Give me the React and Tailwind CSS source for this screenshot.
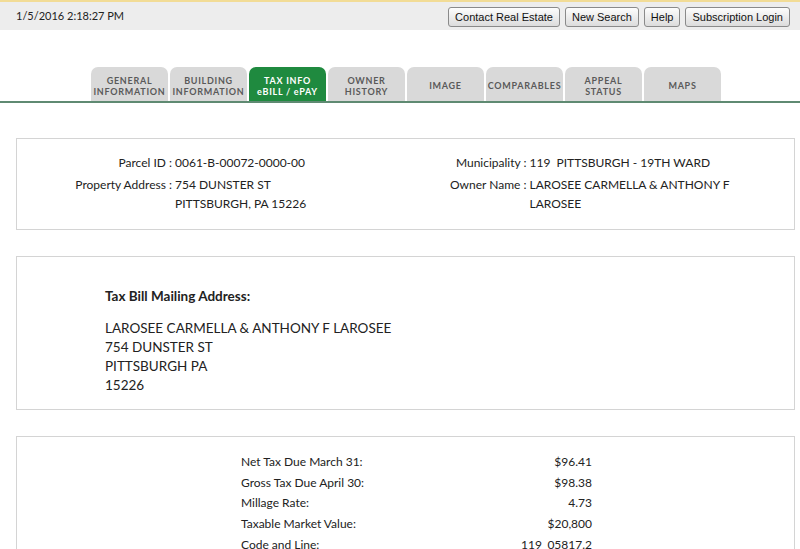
// Parcel detail page: tax info tab
const TABS = [
  ['GENERAL', 'INFORMATION'],
  ['BUILDING', 'INFORMATION'],
  ['TAX INFO', 'eBILL / ePAY'],
  ['OWNER', 'HISTORY'],
  ['IMAGE'],
  ['COMPARABLES'],
  ['APPEAL', 'STATUS'],
  ['MAPS'],
];

const TAX_ROWS = [
  ['Net Tax Due March 31:', '$96.41'],
  ['Gross Tax Due April 30:', '$98.38'],
  ['Millage Rate:', '4.73'],
  ['Taxable Market Value:', '$20,800'],
  ['Code and Line:', '119_05817.2'],
];

function ToolButton({ children }) {
  return (
    <button className="h-[20px] px-[6px] border border-[#8a8a8a] rounded-[3px] bg-gradient-to-b from-[#fdfdfd] to-[#dcdcdc] text-[11px] text-[#111] leading-none font-['Liberation_Sans',sans-serif]">
      {children}
    </button>
  );
}

function Field({ label, children, labelWidth }) {
  return (
    <div className="flex">
      <div className="text-right shrink-0" style={{ width: labelWidth }}>
        {label} :
      </div>
      <div className="pl-[3px]">{children}</div>
    </div>
  );
}

export default function App() {
  return (
    <div className="min-h-[549px] bg-white font-['Lato',sans-serif] text-[#222]">
      {/* top toolbar */}
      <div className="h-[30px] bg-[#ededed] border-t-2 border-[#f2dc96] flex items-center justify-between pl-[16px] pr-[10px]">
        <span className="text-[11px] text-[#222]">1/5/2016 2:18:27 PM</span>
        <div className="flex gap-[5px] pt-[2px]">
          <ToolButton>Contact Real Estate</ToolButton>
          <ToolButton>New Search</ToolButton>
          <ToolButton>Help</ToolButton>
          <ToolButton>Subscription Login</ToolButton>
        </div>
      </div>

      {/* tab strip */}
      <div className="mt-[38px] flex items-end border-b-2 border-[#5f8a72] pl-[91px] h-[35px]">
        {TABS.map((lines, i) => {
          const active = i === 2;
          return (
            <div
              key={lines.join(' ')}
              className={`w-[77px] h-[34px] mr-[2px] rounded-t-[7px] flex flex-col items-center justify-center pt-[3px] text-[9px] font-bold tracking-[0.08em] leading-[11px] ${
                active ? 'bg-[#1f8a3f] text-white' : 'bg-[#d9d9d9] text-[#5a5a5a]'
              }`}
            >
              {lines.map((l) => (
                <span key={l}>{l}</span>
              ))}
            </div>
          );
        })}
      </div>

      <div className="px-[16px] pr-[5px] pt-[35px] flex flex-col gap-[26px]">
        {/* parcel summary */}
        <div className="border border-[#d4d4d4] flex pt-[14px] pb-[16px] text-[12px] leading-[19px]">
          <div className="w-1/2 flex flex-col gap-[3px]">
            <Field label="Parcel ID" labelWidth={155}>0061-B-00072-0000-00</Field>
            <Field label="Property Address" labelWidth={155}>
              754 DUNSTER ST
              <br />
              PITTSBURGH, PA 15226
            </Field>
          </div>
          <div className="w-1/2 flex flex-col gap-[3px]">
            <Field label="Municipality" labelWidth={121}>119&nbsp; PITTSBURGH - 19TH WARD</Field>
            <Field label="Owner Name" labelWidth={121}>
              LAROSEE CARMELLA &amp; ANTHONY F
              <br />
              LAROSEE
            </Field>
          </div>
        </div>

        {/* mailing address */}
        <div className="border border-[#d4d4d4] pl-[88px] pt-[29px] pb-[14px]">
          <div className="text-[13.5px] font-bold leading-[20px]">Tax Bill Mailing Address:</div>
          <div className="mt-[13px] text-[13.5px] leading-[19px]">
            <div>LAROSEE CARMELLA &amp; ANTHONY F LAROSEE</div>
            <div>754 DUNSTER ST</div>
            <div>PITTSBURGH PA</div>
            <div>15226</div>
          </div>
        </div>

        {/* tax figures */}
        <div className="border border-[#d4d4d4] pl-[224px] pt-[15px] pb-[16px]">
          <div className="w-[351px] flex flex-col text-[12px] leading-[20.7px]">
            {TAX_ROWS.map(([label, value]) => (
              <div key={label} className="flex justify-between">
                <span>{label}</span>
                <span>{value}</span>
              </div>
            ))}
          </div>
        </div>
      </div>
    </div>
  );
}
